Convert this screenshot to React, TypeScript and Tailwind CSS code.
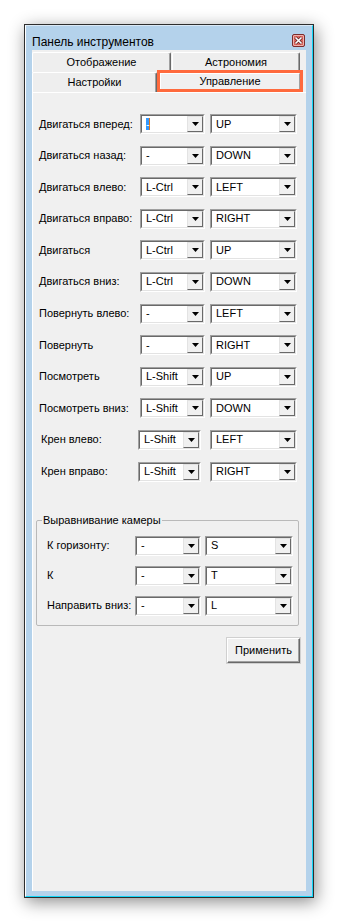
import React from "react";

type Row = { label: string; a: string; b: string; focus?: boolean; shift?: boolean };

const rows: Row[] = [
  { label: "Двигаться вперед:", a: "-", b: "UP", focus: true },
  { label: "Двигаться назад:", a: "-", b: "DOWN" },
  { label: "Двигаться влево:", a: "L-Ctrl", b: "LEFT" },
  { label: "Двигаться вправо:", a: "L-Ctrl", b: "RIGHT" },
  { label: "Двигаться", a: "L-Ctrl", b: "UP" },
  { label: "Двигаться вниз:", a: "L-Ctrl", b: "DOWN" },
  { label: "Повернуть влево:", a: "-", b: "LEFT" },
  { label: "Повернуть", a: "-", b: "RIGHT" },
  { label: "Посмотреть", a: "L-Shift", b: "UP" },
  { label: "Посмотреть вниз:", a: "L-Shift", b: "DOWN" },
  { label: "Крен влево:", a: "L-Shift", b: "LEFT", shift: true },
  { label: "Крен вправо:", a: "L-Shift", b: "RIGHT", shift: true },
];

const camRows = [
  { label: "К горизонту:", a: "-", b: "S" },
  { label: "К", a: "-", b: "T" },
  { label: "Направить вниз:", a: "-", b: "L" },
];

const Combo: React.FC<{ value: string; className: string; focus?: boolean }> = ({ value, className, focus }) => (
  <div className={`h-[20px] flex border border-t-[#a0a0a0] border-l-[#a0a0a0] border-r-white border-b-white ${className}`}>
    <div className="flex flex-1 border border-t-[#696969] border-l-[#696969] border-r-[#e3e3e3] border-b-[#e3e3e3] bg-white">
      <div className="flex-1 flex items-center pl-[4px] text-[11px] leading-[13px] text-black">
        {focus ? (
          <span className="h-[12px] w-[4px] bg-[#3399ff] border-r border-r-[#e0751c] text-white leading-[12px]">-</span>
        ) : (
          value
        )}
      </div>
      <div className="w-[16px] flex items-center justify-center bg-[#f0f0f0] border border-t-[#e3e3e3] border-l-[#e3e3e3] border-r-[#696969] border-b-[#696969]">
        <svg width="7" height="4" viewBox="0 0 7 4">
          <path d="M0 0 H7 L3.5 4 Z" fill="#000" />
        </svg>
      </div>
    </div>
  </div>
);

const Tab: React.FC<{ label: string; className: string }> = ({ label, className }) => (
  <div
    className={`h-[20px] flex items-center justify-center rounded-t-[2px] bg-[#eeeeee] border-t border-l border-white border-r border-r-[#696969] shadow-[inset_-1px_0_0_#a0a0a0] text-[11px] text-black ${className}`}
  >
    {label}
  </div>
);

export default function App() {
  return (
    <div className="w-[338px] h-[922px] bg-white pt-[24px] pl-[24px] font-['Liberation_Sans',Arial,sans-serif]">
      <div className="w-[290px] h-[874px] border border-[#2e2e2e] shadow-[2px_4px_16px_rgba(0,0,0,0.45)]">
        <div className="h-full flex flex-col bg-[#b4d2eb] border-l border-t border-l-white border-t-[#dbe9f5] border-r border-b border-r-[#12d6f8] border-b-[#12d6f8]">
          {/* title bar */}
          <div className="h-[24px] flex items-start justify-between pl-[6px] pr-[7px]">
            <span className="mt-[9px] text-[12px] leading-[14px] text-black">Панель инструментов</span>
            <div className="mt-[8px] w-[13px] h-[13px] rounded-[2px] border border-[#7a2d2d] bg-[#d9645c] shadow-[inset_0_0_0_1px_#f0b0aa] flex items-center justify-center">
              <svg width="9" height="9" viewBox="0 0 9 9">
                <path d="M1.5 1.5 L7.5 7.5 M7.5 1.5 L1.5 7.5" stroke="#5a1d1d" strokeWidth="3" />
                <path d="M1.5 1.5 L7.5 7.5 M7.5 1.5 L1.5 7.5" stroke="#fff" strokeWidth="1.6" />
              </svg>
            </div>
          </div>

          {/* client area */}
          <div className="flex-1 mx-[6px] mb-[5px] bg-[#f0f0f0] flex flex-col pt-[2px]">
            <div className="flex gap-[1px]">
              <Tab label="Отображение" className="w-[139px]" />
              <Tab label="Астрономия" className="w-[128px]" />
            </div>
            <div className="flex items-end">
              <Tab label="Настройки" className="w-[125px] h-[19px]" />
              <div className="w-[146px] h-[22px] -mt-[3px] border-[3px] border-[#ff6a3d] bg-[#f0f0f0] flex">
                <div className="flex-1 flex items-center justify-center border-t border-l border-white border-r border-r-[#a0a0a0] text-[11px] text-black">
                  Управление
                </div>
              </div>
            </div>

            {/* tab page */}
            <div className="flex-1 border-t border-l border-white pt-[21px]">
              <div className="flex flex-col gap-[11.6px]">
                {rows.map((r) => (
                  <div key={r.label} className="flex items-center">
                    <span
                      className={`whitespace-nowrap text-[11px] leading-[13px] text-black ${
                        r.shift ? "pl-[8px] w-[105px]" : "pl-[6px] w-[107px]"
                      }`}
                    >
                      {r.label}
                    </span>
                    <Combo value={r.a} focus={r.focus} className={r.shift ? "w-[63px]" : "w-[65px]"} />
                    <Combo value={r.b} className={r.shift ? "w-[87px] ml-[9px]" : "w-[87px] ml-[5px]"} />
                  </div>
                ))}
              </div>

              <fieldset className="ml-[3px] w-[262px] mt-[32px] border border-[#b9b9b9] rounded-[2px] px-[5px] pb-[9px]">
                <legend className="px-[1px] text-[11px] leading-[13px] text-black">Выравнивание камеры</legend>
                <div className="flex flex-col gap-[10px] pt-[9px]">
                  {camRows.map((r) => (
                    <div key={r.label} className="flex items-center">
                      <span className="whitespace-nowrap pl-[5px] w-[93px] text-[11px] leading-[13px] text-black">{r.label}</span>
                      <Combo value={r.a} className="w-[66px]" />
                      <Combo value={r.b} className="w-[88px] ml-[4px]" />
                    </div>
                  ))}
                </div>
              </fieldset>

              <div className="flex justify-end pr-[6px] mt-[12px]">
                <button className="w-[73px] h-[25px] bg-[#f0f0f0] border border-t-white border-l-white border-r-[#696969] border-b-[#696969] shadow-[inset_-1px_-1px_0_#a0a0a0,0_0_0_1px_#d0d0d0] text-[11px] text-black">
                  Применить
                </button>
              </div>
            </div>
          </div>
        </div>
      </div>
    </div>
  );
}
